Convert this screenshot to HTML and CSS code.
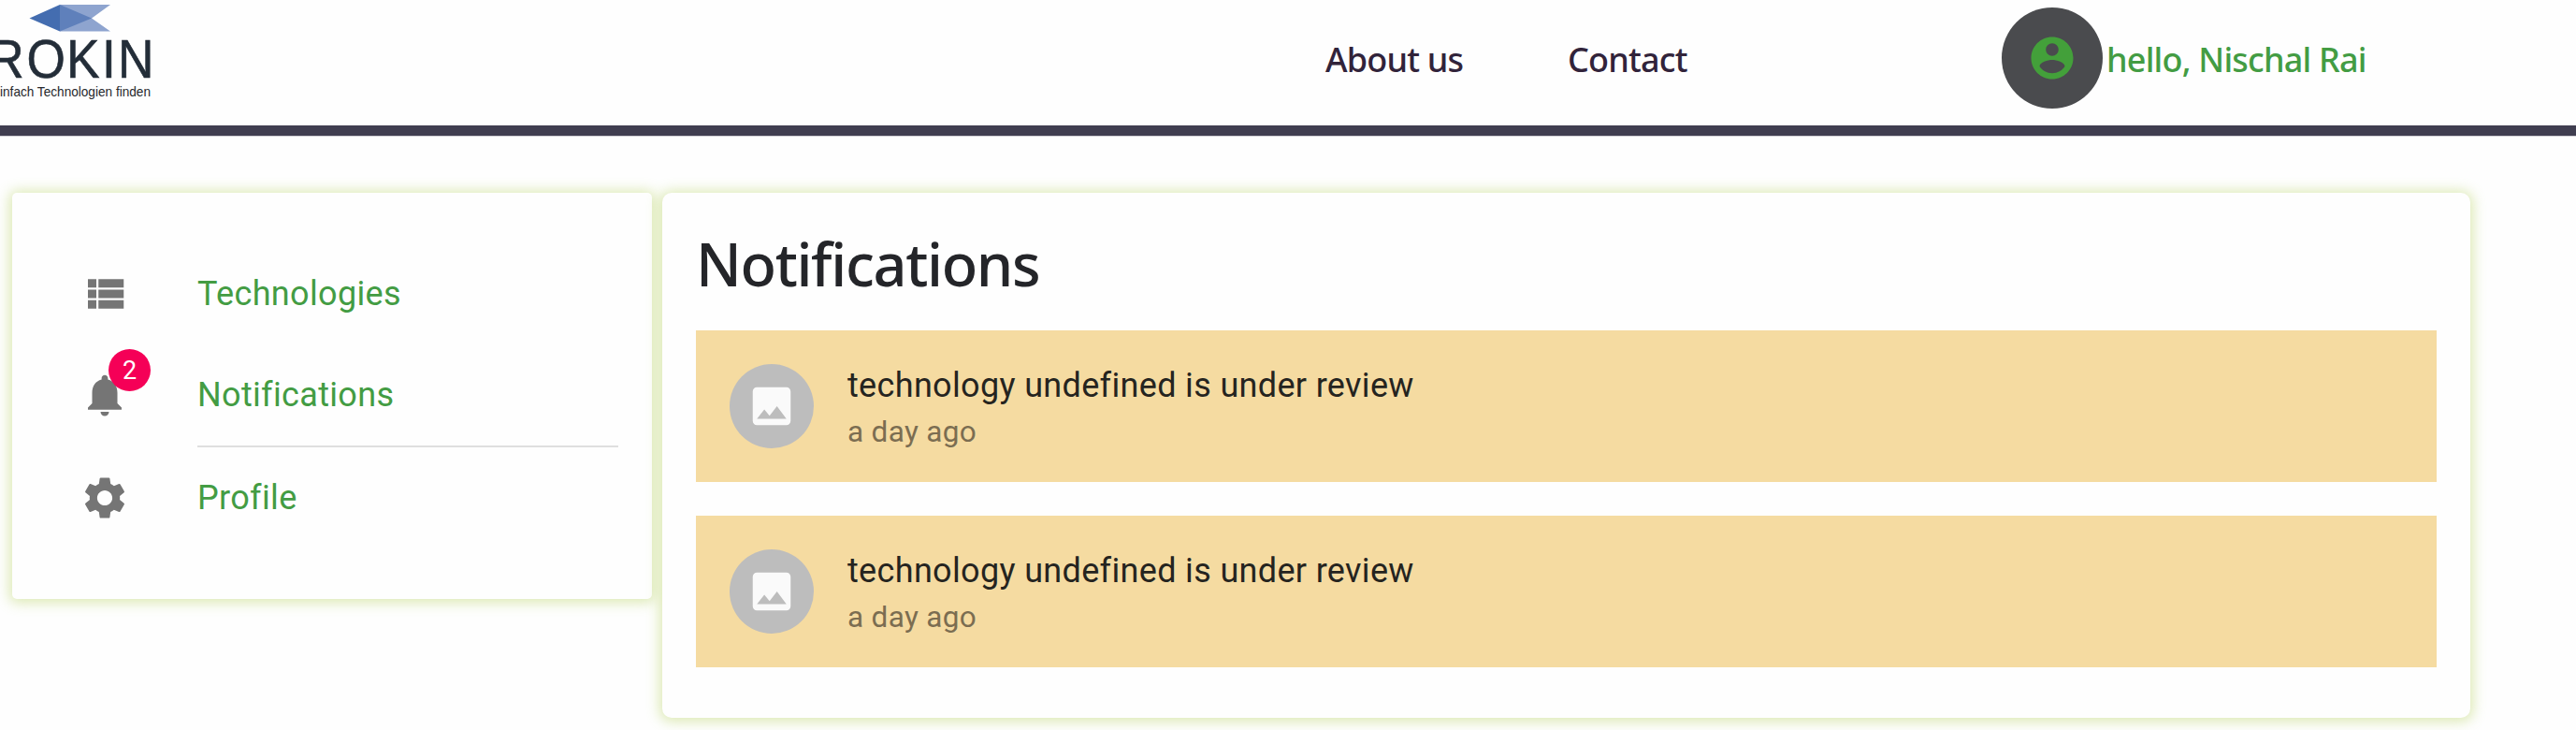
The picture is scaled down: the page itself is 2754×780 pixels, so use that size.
FILE: index.html
```html
<!DOCTYPE html>
<html lang="en">
<head>
<meta charset="utf-8">
<title>Notifications</title>
<link rel="stylesheet" href="styles.css">
</head>
<body>
<header class="header">
  <svg class="logo" viewBox="0 0 180 134" role="img" aria-label="ROKIN">
    <path d="M64 5H118L98 19.500 118 33.500H64Z" fill="#8ea4cf"/>
    <path d="M64 5L98 19.500 64 33.500Z" fill="#5f80bb"/>
    <path d="M31.500 19.500L64 5V33.500Z" fill="#446db0"/>
    <text class="logo-name" transform="scale(.92 1)" x="-13.900 30.900 77.300 118.600 137" y="83">ROKIN</text>
    <text class="logo-tag" x="0" y="103" textLength="161" lengthAdjust="spacingAndGlyphs">infach Technologien finden</text>
  </svg>
  <nav class="nav">
    <a class="nav-about">About us</a>
    <a class="nav-contact">Contact</a>
  </nav>
  <div class="user">
    <span class="user-avatar"><svg class="icon" viewBox="0 0 24 24"><path d="M12 2C6.480 2 2 6.480 2 12s4.480 10 10 10 10-4.480 10-10S17.520 2 12 2zm0 3c1.660 0 3 1.340 3 3s-1.340 3-3 3-3-1.340-3-3 1.340-3 3-3zm0 14.200c-2.500 0-4.710-1.280-6-3.220.030-1.990 4-3.080 6-3.080 1.990 0 5.970 1.090 6 3.080-1.290 1.940-3.500 3.220-6 3.220z"/></svg></span>
    <span class="user-name">hello, Nischal Rai</span>
  </div>
</header>
<main class="main">
  <aside class="card sidebar">
    <a class="menu-item"><span class="menu-icon"><svg class="icon" viewBox="0 0 24 24"><path d="M4 14h4v-4H4v4zm0 5h4v-4H4v4zM4 9h4V5H4v4zm5 5h12v-4H9v4zm0 5h12v-4H9v4zM9 5v4h12V5H9z"/></svg></span><span>Technologies</span></a>
    <a class="menu-item"><span class="menu-icon"><svg class="icon" viewBox="0 0 24 24"><path d="M12 22c1.100 0 2-.9 2-2h-4c0 1.100.89 2 2 2zm6-6v-5c0-3.070-1.640-5.640-4.500-6.320V4c0-.83-.67-1.500-1.500-1.500s-1.500.67-1.500 1.500v.68C7.630 5.360 6 7.920 6 11v5l-2 2v1h16v-1l-2-2z"/></svg><span class="badge">2</span></span><span>Notifications</span></a>
    <div class="divider"></div>
    <a class="menu-item"><span class="menu-icon"><svg class="icon" viewBox="0 0 24 24"><path d="M19.140 12.940c.04-.3.06-.61.06-.94 0-.32-.02-.64-.07-.94l2.030-1.580c.18-.14.23-.41.12-.61l-1.920-3.320c-.12-.22-.37-.29-.59-.22l-2.390.96c-.5-.38-1.030-.7-1.620-.94l-.36-2.540c-.04-.24-.24-.41-.48-.41h-3.840c-.24 0-.43.17-.47.41l-.36 2.540c-.59.24-1.130.57-1.620.94l-2.390-.96c-.22-.08-.47 0-.59.22L2.740 8.870c-.12.21-.08.47.12.61l2.030 1.580c-.05.3-.09.63-.09.94s.02.64.07.94l-2.030 1.580c-.18.14-.23.41-.12.61l1.920 3.320c.12.22.37.29.59.22l2.390-.96c.5.38 1.030.7 1.620.94l.36 2.540c.05.24.24.41.48.41h3.840c.24 0 .44-.17.47-.41l.36-2.540c.59-.24 1.130-.56 1.620-.94l2.390.96c.22.08.47 0 .59-.22l1.920-3.320c.12-.22.07-.47-.12-.61l-2.010-1.580zM12 15.600c-1.980 0-3.600-1.620-3.600-3.600s1.620-3.600 3.600-3.600 3.600 1.620 3.600 3.600-1.620 3.600-3.600 3.600z"/></svg></span><span>Profile</span></a>
  </aside>
  <section class="card content">
    <h1 class="title">Notifications</h1>
    <div class="notice">
      <span class="notice-avatar"><svg class="icon" viewBox="0 0 24 24"><path d="M21 19V5c0-1.100-.9-2-2-2H5c-1.100 0-2 .9-2 2v14c0 1.100.9 2 2 2h14c1.100 0 2-.9 2-2zM8.500 13.500l2.500 3.010L14.500 12l4.500 6H5l3.500-4.500z"/></svg></span>
      <div><p class="notice-text">technology undefined is under review</p><p class="notice-time">a day ago</p></div>
    </div>
    <div class="notice">
      <span class="notice-avatar"><svg class="icon" viewBox="0 0 24 24"><path d="M21 19V5c0-1.100-.9-2-2-2H5c-1.100 0-2 .9-2 2v14c0 1.100.9 2 2 2h14c1.100 0 2-.9 2-2zM8.500 13.500l2.500 3.010L14.500 12l4.500 6H5l3.500-4.500z"/></svg></span>
      <div><p class="notice-text">technology undefined is under review</p><p class="notice-time">a day ago</p></div>
    </div>
  </section>
</main>
</body>
</html>
```
FILE: styles.css
```css
* { box-sizing: border-box; }
body { margin: 0; min-height: 780px; background: #fefefe; font-family: Roboto, "Liberation Sans", sans-serif; }
.icon { display: block; width: 54px; height: 54px; fill: currentColor; }

.header { display: flex; height: 145px; border-bottom: 11px solid #403e50; box-shadow: 0 1px 0 #d2d0d5; font-family: "Noto Sans", "Open Sans", sans-serif; font-size: 36px; font-weight: 500; line-height: 54px; letter-spacing: -.8px; white-space: nowrap; }
.logo { display: block; width: 180px; height: 134px; letter-spacing: 0; }
.logo-name { font: 58px "Liberation Sans", sans-serif; fill: #232d38; stroke: #232d38; stroke-width: .6px; }
.logo-tag { font: 14.500px "Liberation Sans", sans-serif; fill: #26282c; }
.nav { display: flex; width: 1960px; padding: 37px 0 0 1237px; color: #31233a; }
.nav-about { width: 259px; }
.user { display: flex; gap: 4px; padding-top: 8px; color: #439c43; }
.user-avatar { display: grid; place-items: center; width: 108px; height: 108px; border-radius: 50%; background: #4a4b4e; color: #43a03a; }
.user-name { padding-top: 29px; }

.main { display: flex; align-items: flex-start; gap: 11px; height: 635px; padding: 61px 0 0 13px; overflow: hidden; }
.card { background: #fefefe; box-shadow: 0 1px 14px 3px rgba(174, 204, 76, .42); }
.sidebar { width: 684px; height: 434px; padding: 54px 36px; border-radius: 5px; }
.menu-item { display: flex; align-items: center; height: 108px; padding-left: 36px; color: #439c43; font-size: 36px; letter-spacing: .338px; }
.menu-icon { position: relative; width: 126px; color: #757575; }
.badge { position: absolute; top: -22.500px; left: 31px; width: 45px; height: 45px; border-radius: 50%; background: #f50057; color: #fff; font-size: 27px; line-height: 46px; letter-spacing: 0; text-align: center; }
.divider { height: 2px; margin-left: 162px; background: #dfdfdf; }

.content { width: 1933px; height: 561px; padding: 36px; border-radius: 10px; }
.title { margin: 0 0 34px; height: 77px; color: #242529; font: 500 63px/79px "Noto Sans", "Open Sans", sans-serif; letter-spacing: -1.350px; }
.notice { display: flex; align-items: center; gap: 36px; height: 162px; margin-bottom: 36px; padding: 0 36px; background: #f5dba1; }
.notice-avatar { display: grid; place-items: center; width: 90px; height: 90px; border-radius: 50%; background: #bdbdbd; color: #fafafa; }
.notice-text { margin: 0; color: #25241f; font-size: 36px; line-height: 54px; letter-spacing: .338px; }
.notice-time { margin: 0; color: #7b6d51; font-size: 31.500px; line-height: 45px; letter-spacing: .337px; }
```
